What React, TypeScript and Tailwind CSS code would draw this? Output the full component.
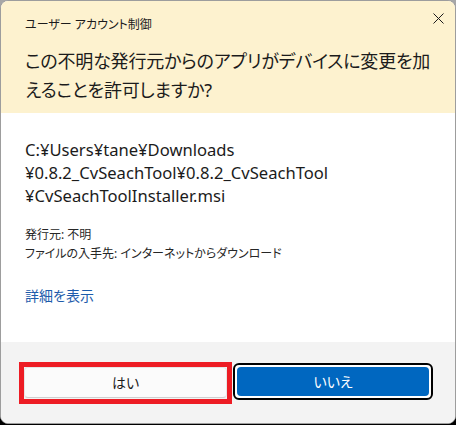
const App = () => {
  return (
    <div className="w-[456px] h-[425px] bg-gradient-to-b from-[#a7a7a7] via-[#8a8a8a] to-black font-['Noto_Sans','Noto_Sans_CJK_JP',sans-serif] [font-feature-settings:'palt']">
      <div className="w-[456px] h-[424px] rounded-[8px] overflow-hidden border border-[#9d9d9d] flex flex-col bg-white">
        {/* Header */}
        <div className="bg-[#fdf2cf] h-[112px] pl-[24px] pr-[10px] relative">
          <div className="pt-[16px] text-[12px] leading-[16px] text-[#1b1b1b]">
            ユーザー アカウント制御
          </div>
          <button className="absolute right-[11px] top-[11px] w-[12px] h-[12px] flex items-center justify-center" aria-label="閉じる">
            <svg width="11" height="11" viewBox="0 0 11 11" fill="none">
              <path d="M0.5 0.5L10.5 10.5M10.5 0.5L0.5 10.5" stroke="#1b1b1b" strokeWidth="1" />
            </svg>
          </button>
          <h1 className="mt-[14px] text-[18px] leading-[29px] text-[#1b1b1b] font-normal tracking-[-0.2px]">
            <span className="block whitespace-nowrap">この不明な発行元からのアプリがデバイスに変更を加</span>
            <span className="block whitespace-nowrap">えることを許可しますか?</span>
          </h1>
        </div>

        {/* Body */}
        <div className="flex-1 pl-[24px] pt-[25px] text-[#1b1b1b]">
          <div className="text-[16.6px] leading-[23px]">
            <div className="whitespace-nowrap">C:¥Users¥tane¥Downloads</div>
            <div className="whitespace-nowrap">¥0.8.2_CvSeachTool¥0.8.2_CvSeachTool</div>
            <div className="whitespace-nowrap">¥CvSeachToolInstaller.msi</div>
          </div>
          <div className="mt-[18px] text-[12px] leading-[19px] text-[#262626]">
            <div>発行元: 不明</div>
            <div>ファイルの入手先: インターネットからダウンロード</div>
          </div>
          <a href="#" className="inline-block mt-[24px] text-[14px] leading-[18px] text-[#1d5cab]">
            詳細を表示
          </a>
        </div>

        {/* Footer */}
        <div className="h-[81px] bg-[#f3f3f3] pl-[18px] pt-[20px] flex items-start gap-[1px]">
          <div className="w-[213px] h-[42px] border-[5px] border-[#ed1c24] flex">
            <button className="flex-1 h-[31px] rounded-[4px] bg-[#fbfbfb] border border-[#e6e6e6] border-b-[#cfcfcf] text-[14px] text-[#1b1b1b]">
              はい
            </button>
          </div>
          <div className="mt-[1px] w-[200px] h-[37px] rounded-[6px] border-2 border-black bg-white p-[2px] flex">
            <button className="flex-1 rounded-[4px] bg-[#0067c0] text-white text-[14px]">
              いいえ
            </button>
          </div>
        </div>
      </div>
    </div>
  );
};

export default App;
